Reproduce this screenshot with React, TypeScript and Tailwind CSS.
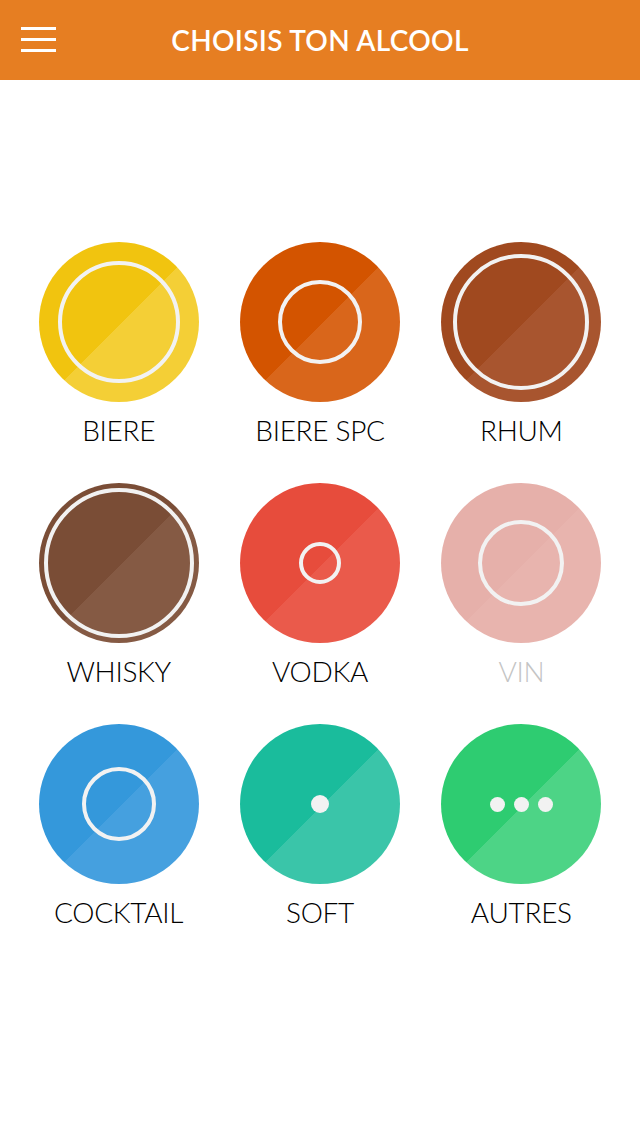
type Drink = {
  label: string;
  bg: string;
  mark: React.ReactNode;
  muted?: boolean;
};

const ring = (size: string) => (
  <div className={`${size} rounded-full border-[4px] border-[#f2f2f2]`} />
);

const drinks: Drink[] = [
  { label: "BIERE", bg: "bg-[linear-gradient(135deg,#f1c40f_51%,#f4cf36_51%)]", mark: ring("w-[122px] h-[122px]") },
  { label: "BIERE SPC", bg: "bg-[linear-gradient(135deg,#d35400_51%,#d9661b_51%)]", mark: ring("w-[84px] h-[84px]") },
  { label: "RHUM", bg: "bg-[linear-gradient(135deg,#a0491f_51%,#a8552f_51%)]", mark: ring("w-[136px] h-[136px]") },
  { label: "WHISKY", bg: "bg-[linear-gradient(135deg,#7a4d36_51%,#855a44_51%)]", mark: ring("w-[150px] h-[150px]") },
  { label: "VODKA", bg: "bg-[linear-gradient(135deg,#e74c3c_51%,#ea5a4b_51%)]", mark: ring("w-[42px] h-[42px]") },
  { label: "VIN", bg: "bg-[linear-gradient(135deg,#e6b0aa_51%,#e8b4ae_51%)]", mark: ring("w-[86px] h-[86px]"), muted: true },
  { label: "COCKTAIL", bg: "bg-[linear-gradient(135deg,#3498db_51%,#45a0df_51%)]", mark: ring("w-[74px] h-[74px]") },
  {
    label: "SOFT",
    bg: "bg-[linear-gradient(135deg,#1abc9c_51%,#3ac5a9_51%)]",
    mark: <div className="w-[18px] h-[18px] rounded-full bg-[#f2f2f2]" />,
  },
  {
    label: "AUTRES",
    bg: "bg-[linear-gradient(135deg,#2ecc71_51%,#4dd486_51%)]",
    mark: (
      <div className="flex gap-[9px]">
        <div className="w-[15px] h-[15px] rounded-full bg-[#f2f2f2]" />
        <div className="w-[15px] h-[15px] rounded-full bg-[#f2f2f2]" />
        <div className="w-[15px] h-[15px] rounded-full bg-[#f2f2f2]" />
      </div>
    ),
  },
];

export default function App() {
  return (
    <div className="w-[640px] h-[1136px] bg-white font-['Lato',sans-serif]">
      <header className="h-20 bg-[#e67e22] flex items-center relative">
        <button className="absolute left-[21px] top-[27px] flex flex-col gap-[8px]">
          <span className="block w-[35px] h-[3px] bg-white" />
          <span className="block w-[35px] h-[3px] bg-white" />
          <span className="block w-[35px] h-[3px] bg-white" />
        </button>
        <h1 className="w-full text-center text-white text-[28px] font-semibold tracking-[0.3px] leading-none">
          CHOISIS TON ALCOOL
        </h1>
      </header>

      <div className="grid grid-cols-3 px-[18px] pt-[162px] gap-y-[35px]">
        {drinks.map((d) => (
          <div key={d.label} className="flex flex-col items-center">
            <div className={`w-[160px] h-[160px] rounded-full flex items-center justify-center ${d.bg}`}>
              {d.mark}
            </div>
            <span
              className={`mt-[10px] text-[28px] font-light tracking-[-0.3px] leading-[36px] ${d.muted ? "text-[#c4c4c4]" : "text-black"}`}
            >
              {d.label}
            </span>
          </div>
        ))}
      </div>
    </div>
  );
}
